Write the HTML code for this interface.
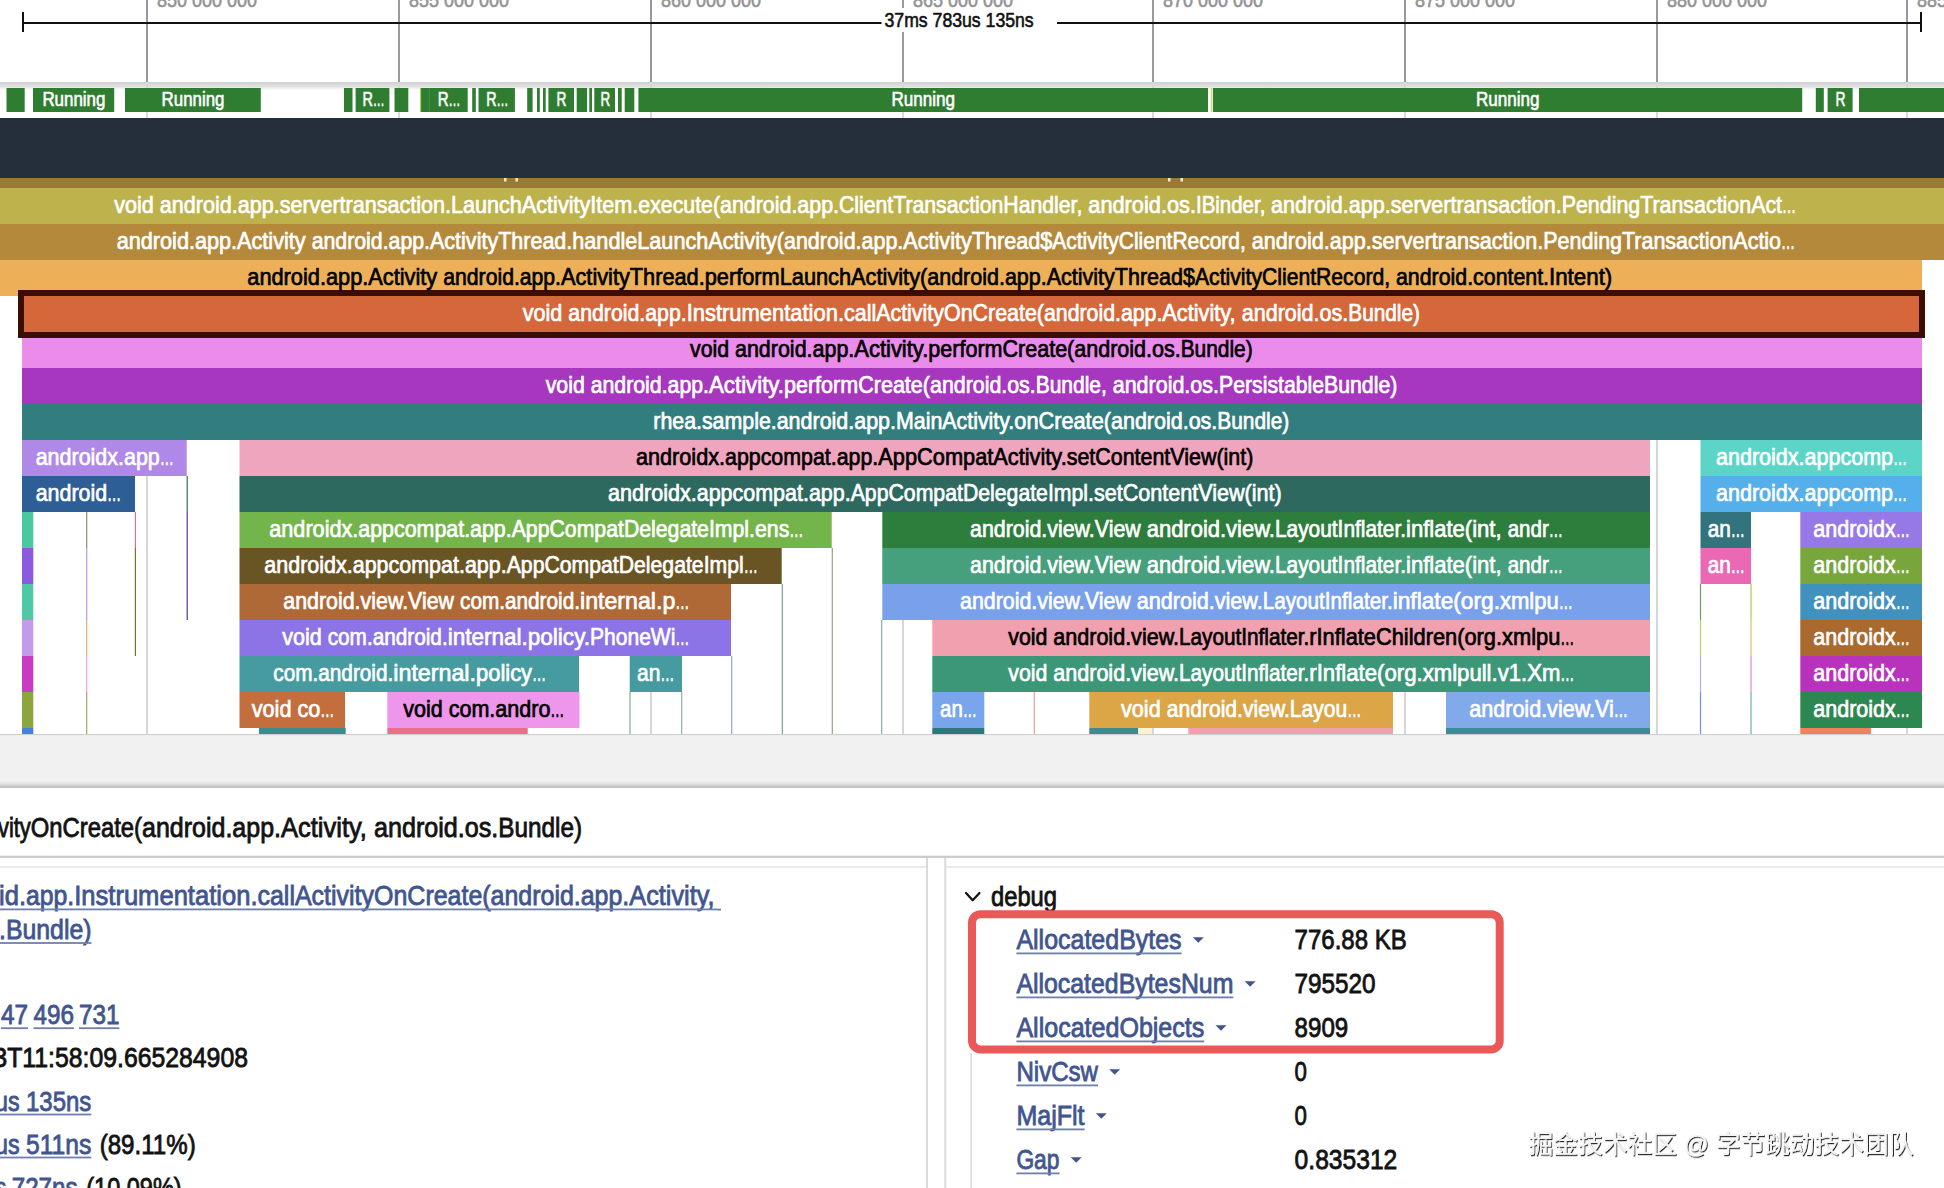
<!DOCTYPE html>
<html lang="en"><head><meta charset="utf-8"><title>Perfetto trace - slice details</title>
<style>
html,body{margin:0;padding:0;background:#fff;}
body{width:1944px;height:1188px;overflow:hidden;font-family:"Liberation Sans", "Noto Sans CJK SC", sans-serif;}
svg{display:block;font-family:"Liberation Sans", "Noto Sans CJK SC", sans-serif;}
text{white-space:pre;}
.wm{font-family:"Liberation Sans","Noto Sans CJK SC",sans-serif;}
</style></head><body>
<svg width="1944" height="1188" viewBox="0 0 1944 1188">
<defs>
<linearGradient id="trk" x1="0" y1="0" x2="0" y2="1"><stop offset="0" stop-color="#d0d0d0"/><stop offset="0.6" stop-color="#e2e2e2"/><stop offset="1" stop-color="#ffffff"/></linearGradient>
<linearGradient id="hdl" x1="0" y1="0" x2="0" y2="1"><stop offset="0" stop-color="#f1f1f1"/><stop offset="0.45" stop-color="#e6e6e6"/><stop offset="1" stop-color="#c4c4c4"/></linearGradient>
<filter id="wmf" x="-5%" y="-30%" width="110%" height="170%"><feDropShadow dx="1" dy="1.2" stdDeviation="0.7" flood-color="#000" flood-opacity="0.85"/></filter>
</defs>
<rect width="1944" height="1188" fill="#fff"/>

<g id="time-axis">
<rect x="146" y="0" width="2" height="82" fill="#999"/>
<text x="157" y="7" font-size="20" fill="#949494" stroke="#949494" stroke-width="0.60" textLength="100" lengthAdjust="spacingAndGlyphs">850 000 000</text>
<rect x="398" y="0" width="2" height="82" fill="#999"/>
<text x="409" y="7" font-size="20" fill="#949494" stroke="#949494" stroke-width="0.60" textLength="100" lengthAdjust="spacingAndGlyphs">855 000 000</text>
<rect x="650" y="0" width="2" height="82" fill="#999"/>
<text x="661" y="7" font-size="20" fill="#949494" stroke="#949494" stroke-width="0.60" textLength="100" lengthAdjust="spacingAndGlyphs">860 000 000</text>
<rect x="902" y="0" width="2" height="82" fill="#999"/>
<text x="913" y="7" font-size="20" fill="#949494" stroke="#949494" stroke-width="0.60" textLength="100" lengthAdjust="spacingAndGlyphs">865 000 000</text>
<rect x="1152" y="0" width="2" height="82" fill="#999"/>
<text x="1163" y="7" font-size="20" fill="#949494" stroke="#949494" stroke-width="0.60" textLength="100" lengthAdjust="spacingAndGlyphs">870 000 000</text>
<rect x="1404" y="0" width="2" height="82" fill="#999"/>
<text x="1415" y="7" font-size="20" fill="#949494" stroke="#949494" stroke-width="0.60" textLength="100" lengthAdjust="spacingAndGlyphs">875 000 000</text>
<rect x="1656" y="0" width="2" height="82" fill="#999"/>
<text x="1667" y="7" font-size="20" fill="#949494" stroke="#949494" stroke-width="0.60" textLength="100" lengthAdjust="spacingAndGlyphs">880 000 000</text>
<rect x="1906" y="0" width="2" height="82" fill="#999"/>
<text x="1917" y="7" font-size="20" fill="#949494" stroke="#949494" stroke-width="0.60" textLength="100" lengthAdjust="spacingAndGlyphs">885 000 000</text>
<rect x="23" y="22" width="1898" height="2" fill="#111"/>
<rect x="22" y="12" width="2" height="20" fill="#111"/>
<rect x="1920" y="12" width="2" height="20" fill="#111"/>
<rect x="881.5" y="8" width="175.5" height="24" fill="#fff"/>
<text x="884.5" y="27" font-size="20" fill="#111" stroke="#111" stroke-width="0.60" textLength="149.2" lengthAdjust="spacingAndGlyphs">37ms 783us 135ns</text>
</g>
<g id="thread-state">
<rect x="0" y="82" width="1944" height="36" fill="#fff"/>
<rect x="0" y="82" width="1944" height="8" fill="url(#trk)"/>
<rect x="146" y="82" width="2" height="36" fill="#d4dcd4"/>
<rect x="398" y="82" width="2" height="36" fill="#d4dcd4"/>
<rect x="650" y="82" width="2" height="36" fill="#d4dcd4"/>
<rect x="902" y="82" width="2" height="36" fill="#d4dcd4"/>
<rect x="1152" y="82" width="2" height="36" fill="#d4dcd4"/>
<rect x="1404" y="82" width="2" height="36" fill="#d4dcd4"/>
<rect x="1656" y="82" width="2" height="36" fill="#d4dcd4"/>
<rect x="1906" y="82" width="2" height="36" fill="#d4dcd4"/>
<rect x="6.5" y="88" width="18.2" height="24" fill="#2f7d31"/>
<rect x="33" y="88" width="81.2" height="24" fill="#2f7d31"/>
<rect x="125" y="88" width="135.8" height="24" fill="#2f7d31"/>
<rect x="344" y="88" width="8.5" height="24" fill="#2f7d31"/>
<rect x="355.6" y="88" width="33.8" height="24" fill="#2f7d31"/>
<rect x="394.5" y="88" width="13.8" height="24" fill="#2f7d31"/>
<rect x="420.9" y="88" width="46.8" height="24" fill="#2f7d31"/>
<rect x="472.2" y="88" width="3.6" height="24" fill="#2f7d31"/>
<rect x="478.5" y="88" width="36.4" height="24" fill="#2f7d31"/>
<rect x="527.2" y="88" width="5.4" height="24" fill="#2f7d31"/>
<rect x="537" y="88" width="2.8" height="24" fill="#2f7d31"/>
<rect x="543" y="88" width="2.7" height="24" fill="#2f7d31"/>
<rect x="548.4" y="88" width="25.6" height="24" fill="#2f7d31"/>
<rect x="576.7" y="88" width="10.4" height="24" fill="#2f7d31"/>
<rect x="589.3" y="88" width="2.7" height="24" fill="#2f7d31"/>
<rect x="594.3" y="88" width="20.7" height="24" fill="#2f7d31"/>
<rect x="618" y="88" width="3.7" height="24" fill="#2f7d31"/>
<rect x="624.7" y="88" width="9.6" height="24" fill="#2f7d31"/>
<rect x="638.4" y="88" width="569.6" height="24" fill="#2f7d31"/>
<rect x="1213" y="88" width="589.2" height="24" fill="#2f7d31"/>
<rect x="1815.8" y="88" width="8" height="24" fill="#2f7d31"/>
<rect x="1827.6" y="88" width="25" height="24" fill="#2f7d31"/>
<rect x="1859" y="88" width="85" height="24" fill="#2f7d31"/>
<rect x="428.9" y="88" width="0.7" height="24" fill="#4f9452"/>
<rect x="420.2" y="88" width="1" height="24" fill="#9bbf2e"/>
<rect x="1210.8" y="88" width="1.6" height="24" fill="#c6d878"/>
<text x="42.4" y="105.8" font-size="20" fill="#fff" stroke="#fff" stroke-width="0.60" textLength="63" lengthAdjust="spacingAndGlyphs">Running</text>
<text x="161.6" y="105.8" font-size="20" fill="#fff" stroke="#fff" stroke-width="0.60" textLength="62.9" lengthAdjust="spacingAndGlyphs">Running</text>
<text y="105.8" font-size="20" fill="#fff" stroke="#fff" stroke-width="0.60"><tspan x="362.4" textLength="10.4" lengthAdjust="spacingAndGlyphs">R</tspan><tspan x="372.8" textLength="11.9" lengthAdjust="spacingAndGlyphs">…</tspan></text>
<text y="105.8" font-size="20" fill="#fff" stroke="#fff" stroke-width="0.60"><tspan x="437.7" textLength="10.9" lengthAdjust="spacingAndGlyphs">R</tspan><tspan x="448.6" textLength="11.9" lengthAdjust="spacingAndGlyphs">…</tspan></text>
<text y="105.8" font-size="20" fill="#fff" stroke="#fff" stroke-width="0.60"><tspan x="486.3" textLength="10.3" lengthAdjust="spacingAndGlyphs">R</tspan><tspan x="496.6" textLength="11.9" lengthAdjust="spacingAndGlyphs">…</tspan></text>
<text x="556.5" y="105.8" font-size="20" fill="#fff" stroke="#fff" stroke-width="0.60" textLength="9.9" lengthAdjust="spacingAndGlyphs">R</text>
<text x="600.6" y="105.8" font-size="20" fill="#fff" stroke="#fff" stroke-width="0.60" textLength="9.7" lengthAdjust="spacingAndGlyphs">R</text>
<text x="891.5" y="105.8" font-size="20" fill="#fff" stroke="#fff" stroke-width="0.60" textLength="63.5" lengthAdjust="spacingAndGlyphs">Running</text>
<text x="1476" y="105.8" font-size="20" fill="#fff" stroke="#fff" stroke-width="0.60" textLength="63.5" lengthAdjust="spacingAndGlyphs">Running</text>
<text x="1835.4" y="105.8" font-size="20" fill="#fff" stroke="#fff" stroke-width="0.60" textLength="10" lengthAdjust="spacingAndGlyphs">R</text>
</g>
<rect x="0" y="118" width="1944" height="60" fill="#252e3b"/>
<g id="slices">
<rect x="146" y="178" width="2" height="556" fill="#d6d6d6"/>
<rect x="398" y="178" width="2" height="556" fill="#d6d6d6"/>
<rect x="650" y="178" width="2" height="556" fill="#d6d6d6"/>
<rect x="902" y="178" width="2" height="556" fill="#d6d6d6"/>
<rect x="1152" y="178" width="2" height="556" fill="#d6d6d6"/>
<rect x="1404" y="178" width="2" height="556" fill="#d6d6d6"/>
<rect x="1656" y="178" width="2" height="556" fill="#d6d6d6"/>
<rect x="1906" y="178" width="2" height="556" fill="#d6d6d6"/>
<rect x="0" y="178" width="1944" height="10" fill="#9b7a37"/>
<rect x="504" y="178" width="2.5" height="3.5" fill="#f3ead6"/>
<rect x="515.5" y="178" width="2.5" height="3.5" fill="#f3ead6"/>
<rect x="1168" y="178" width="2.5" height="3.5" fill="#f3ead6"/>
<rect x="1180.5" y="178" width="2.5" height="3.5" fill="#f3ead6"/>
<rect x="0" y="188" width="1944" height="36" fill="#bdb24c"/>
<rect x="0" y="224" width="1944" height="36" fill="#b4893c"/>
<rect x="0" y="260" width="1922" height="36" fill="#edb058"/>
<rect x="22" y="332" width="1900" height="36" fill="#eb8ceb"/>
<rect x="22" y="368" width="1900" height="36" fill="#a637be"/>
<rect x="22" y="404" width="1900" height="36" fill="#327d7d"/>
<rect x="21" y="293" width="1901" height="42" fill="#d5683a" stroke="#3d0c02" stroke-width="6"/>
<rect x="22" y="440" width="164.7" height="36" fill="#b088e8"/>
<rect x="239.5" y="440" width="1410.5" height="36" fill="#f0a5be"/>
<rect x="1700.5" y="440" width="221.5" height="36" fill="#5cd4c8"/>
<rect x="22" y="476" width="113" height="36" fill="#2d5f96"/>
<rect x="239.5" y="476" width="1410.5" height="36" fill="#2d695f"/>
<rect x="1700.5" y="476" width="221.5" height="36" fill="#55afeb"/>
<rect x="22" y="512" width="11.3" height="36" fill="#4bc8a0"/>
<rect x="239.5" y="512" width="592.2" height="36" fill="#73b44b"/>
<rect x="882.3" y="512" width="767.7" height="36" fill="#2d7d3c"/>
<rect x="1700.5" y="512" width="50.5" height="36" fill="#32737d"/>
<rect x="1800.3" y="512" width="121.7" height="36" fill="#9678e6"/>
<rect x="22" y="548" width="11.3" height="36" fill="#8c5adc"/>
<rect x="239.5" y="548" width="542.2" height="36" fill="#695523"/>
<rect x="882.3" y="548" width="767.7" height="36" fill="#46a07d"/>
<rect x="1700.5" y="548" width="50.5" height="36" fill="#eb69b4"/>
<rect x="1800.3" y="548" width="121.7" height="36" fill="#78a53c"/>
<rect x="22" y="584" width="11.3" height="36" fill="#50c8a5"/>
<rect x="239.5" y="584" width="491.5" height="36" fill="#af6937"/>
<rect x="882.3" y="584" width="767.7" height="36" fill="#78a0eb"/>
<rect x="1800.3" y="584" width="121.7" height="36" fill="#4191be"/>
<rect x="22" y="620" width="11.3" height="36" fill="#c39beb"/>
<rect x="239.5" y="620" width="491.5" height="36" fill="#8c73e6"/>
<rect x="932.3" y="620" width="717.7" height="36" fill="#f0a0af"/>
<rect x="1800.3" y="620" width="121.7" height="36" fill="#aa692d"/>
<rect x="22" y="656" width="11.3" height="36" fill="#c83cc3"/>
<rect x="239.5" y="656" width="339.5" height="36" fill="#469ba0"/>
<rect x="629.7" y="656" width="52.3" height="36" fill="#469ba0"/>
<rect x="932.3" y="656" width="717.7" height="36" fill="#3c9678"/>
<rect x="1800.3" y="656" width="121.7" height="36" fill="#b932be"/>
<rect x="22" y="692" width="11.3" height="36" fill="#8ca53c"/>
<rect x="239.5" y="692" width="105.5" height="36" fill="#c36e3c"/>
<rect x="387.3" y="692" width="192.2" height="36" fill="#ee96eb"/>
<rect x="932.3" y="692" width="52" height="36" fill="#78a5eb"/>
<rect x="1089.3" y="692" width="303.7" height="36" fill="#dca546"/>
<rect x="1446" y="692" width="204" height="36" fill="#82aaeb"/>
<rect x="1800.3" y="692" width="121.7" height="36" fill="#2d8750"/>
<rect x="22" y="728" width="11.3" height="6" fill="#4682d7"/>
<rect x="259" y="728" width="86.7" height="6" fill="#3c8c8c"/>
<rect x="387.3" y="728" width="140.4" height="6" fill="#eb6e8c"/>
<rect x="932.3" y="728" width="52" height="6" fill="#2d7878"/>
<rect x="1089.3" y="728" width="49" height="6" fill="#3c8c8c"/>
<rect x="1138.3" y="728" width="13.7" height="6" fill="#fbf3d0"/>
<rect x="1188.3" y="728" width="204.7" height="6" fill="#f0a0af"/>
<rect x="1446" y="728" width="204" height="6" fill="#3c8c96"/>
<rect x="1800.3" y="728" width="70.7" height="6" fill="#f0825a"/>
<rect x="86.1" y="512" width="1.2" height="36" fill="#8a9070"/>
<rect x="86.1" y="548" width="1.2" height="72" fill="#b39ae0"/>
<rect x="86.1" y="620" width="1.2" height="36" fill="#e8b060"/>
<rect x="86.1" y="656" width="1.2" height="36" fill="#f0a0e0"/>
<rect x="86.1" y="692" width="1.2" height="42" fill="#a0a870"/>
<rect x="134.8" y="512" width="1.2" height="36" fill="#e07090"/>
<rect x="134.8" y="548" width="1.2" height="108" fill="#77752a"/>
<rect x="186.6" y="476" width="1.2" height="36" fill="#2f6f60"/>
<rect x="186.6" y="512" width="1.2" height="108" fill="#5038a0"/>
<rect x="629.4" y="692" width="1.2" height="42" fill="#7ab0a0"/>
<rect x="681.1" y="692" width="1.2" height="42" fill="#8fb0a8"/>
<rect x="731.1" y="656" width="1.2" height="78" fill="#9aa0d8"/>
<rect x="781.7" y="584" width="1.2" height="150" fill="#7fa090"/>
<rect x="831.7" y="548" width="1.2" height="186" fill="#90a880"/>
<rect x="881.1" y="620" width="1.2" height="114" fill="#80a8c0"/>
<rect x="1033.7" y="692" width="1.2" height="42" fill="#e0a0a0"/>
<rect x="1699.9" y="584" width="1.2" height="36" fill="#6f9a60"/>
<rect x="1699.9" y="620" width="1.2" height="36" fill="#b8d060"/>
<rect x="1699.9" y="656" width="1.2" height="36" fill="#c0a8e8"/>
<rect x="1699.9" y="692" width="1.2" height="42" fill="#7090e0"/>
<rect x="1750.4" y="584" width="1.2" height="36" fill="#b0c860"/>
<rect x="1750.4" y="620" width="1.2" height="36" fill="#d8c070"/>
<rect x="1750.4" y="656" width="1.2" height="36" fill="#d090d8"/>
<rect x="1750.4" y="692" width="1.2" height="42" fill="#70b0a8"/>
<text y="212.8" font-size="24" fill="#fff" stroke="#fff" stroke-width="0.72"><tspan x="114.3" textLength="336.7" lengthAdjust="spacingAndGlyphs">void android.app.servertransaction.</tspan><tspan x="451" textLength="187.3" lengthAdjust="spacingAndGlyphs">LaunchActivityItem.</tspan><tspan x="638.3" textLength="81.7" lengthAdjust="spacingAndGlyphs">execute(</tspan><tspan x="720" textLength="119" lengthAdjust="spacingAndGlyphs">android.app.</tspan><tspan x="839" textLength="249.3" lengthAdjust="spacingAndGlyphs">ClientTransactionHandler, </tspan><tspan x="1088.3" textLength="107.7" lengthAdjust="spacingAndGlyphs">android.os.</tspan><tspan x="1196" textLength="75" lengthAdjust="spacingAndGlyphs">IBinder, </tspan><tspan x="1271" textLength="290.7" lengthAdjust="spacingAndGlyphs">android.app.servertransaction.</tspan><tspan x="1561.7" textLength="220.36" lengthAdjust="spacingAndGlyphs">PendingTransactionAct</tspan><tspan x="1782.06" textLength="14.14" lengthAdjust="spacingAndGlyphs">…</tspan></text>
<text y="248.8" font-size="24" fill="#fff" stroke="#fff" stroke-width="0.72"><tspan x="116.7" textLength="195" lengthAdjust="spacingAndGlyphs">android.app.Activity </tspan><tspan x="311.7" textLength="118.3" lengthAdjust="spacingAndGlyphs">android.app.</tspan><tspan x="430" textLength="142.3" lengthAdjust="spacingAndGlyphs">ActivityThread.</tspan><tspan x="572.3" textLength="211.7" lengthAdjust="spacingAndGlyphs">handleLaunchActivity(</tspan><tspan x="784" textLength="119.3" lengthAdjust="spacingAndGlyphs">android.app.</tspan><tspan x="903.3" textLength="149" lengthAdjust="spacingAndGlyphs">ActivityThread$</tspan><tspan x="1052.3" textLength="199.4" lengthAdjust="spacingAndGlyphs">ActivityClientRecord, </tspan><tspan x="1251.7" textLength="291.6" lengthAdjust="spacingAndGlyphs">android.app.servertransaction.</tspan><tspan x="1543.3" textLength="237.76" lengthAdjust="spacingAndGlyphs">PendingTransactionActio</tspan><tspan x="1781.06" textLength="14.14" lengthAdjust="spacingAndGlyphs">…</tspan></text>
<text y="284.8" font-size="24" fill="#000" stroke="#000" stroke-width="0.72"><tspan x="247.3" textLength="196" lengthAdjust="spacingAndGlyphs">android.app.Activity </tspan><tspan x="443.3" textLength="117.7" lengthAdjust="spacingAndGlyphs">android.app.</tspan><tspan x="561" textLength="143.7" lengthAdjust="spacingAndGlyphs">ActivityThread.</tspan><tspan x="704.7" textLength="222.6" lengthAdjust="spacingAndGlyphs">performLaunchActivity(</tspan><tspan x="927.3" textLength="119.4" lengthAdjust="spacingAndGlyphs">android.app.</tspan><tspan x="1046.7" textLength="148.3" lengthAdjust="spacingAndGlyphs">ActivityThread$</tspan><tspan x="1195" textLength="201" lengthAdjust="spacingAndGlyphs">ActivityClientRecord, </tspan><tspan x="1396" textLength="153" lengthAdjust="spacingAndGlyphs">android.content.</tspan><tspan x="1549" textLength="63.3" lengthAdjust="spacingAndGlyphs">Intent)</tspan></text>
<text y="320.8" font-size="24" fill="#fff" stroke="#fff" stroke-width="0.72"><tspan x="522.7" textLength="45.6" lengthAdjust="spacingAndGlyphs">void </tspan><tspan x="568.3" textLength="118.4" lengthAdjust="spacingAndGlyphs">android.app.</tspan><tspan x="686.7" textLength="157.3" lengthAdjust="spacingAndGlyphs">Instrumentation.</tspan><tspan x="844" textLength="200" lengthAdjust="spacingAndGlyphs">callActivityOnCreate(</tspan><tspan x="1044" textLength="118.3" lengthAdjust="spacingAndGlyphs">android.app.</tspan><tspan x="1162.3" textLength="79.4" lengthAdjust="spacingAndGlyphs">Activity, </tspan><tspan x="1241.7" textLength="106.6" lengthAdjust="spacingAndGlyphs">android.os.</tspan><tspan x="1348.3" textLength="71.7" lengthAdjust="spacingAndGlyphs">Bundle)</tspan></text>
<text y="356.8" font-size="24" fill="#000" stroke="#000" stroke-width="0.72"><tspan x="690" textLength="45" lengthAdjust="spacingAndGlyphs">void </tspan><tspan x="735" textLength="119.3" lengthAdjust="spacingAndGlyphs">android.app.</tspan><tspan x="854.3" textLength="74" lengthAdjust="spacingAndGlyphs">Activity.</tspan><tspan x="928.3" textLength="146" lengthAdjust="spacingAndGlyphs">performCreate(</tspan><tspan x="1074.3" textLength="106.4" lengthAdjust="spacingAndGlyphs">android.os.</tspan><tspan x="1180.7" textLength="72" lengthAdjust="spacingAndGlyphs">Bundle)</tspan></text>
<text y="392.8" font-size="24" fill="#fff" stroke="#fff" stroke-width="0.72"><tspan x="545.7" textLength="45" lengthAdjust="spacingAndGlyphs">void </tspan><tspan x="590.7" textLength="118.3" lengthAdjust="spacingAndGlyphs">android.app.</tspan><tspan x="709" textLength="75" lengthAdjust="spacingAndGlyphs">Activity.</tspan><tspan x="784" textLength="146" lengthAdjust="spacingAndGlyphs">performCreate(</tspan><tspan x="930" textLength="105.7" lengthAdjust="spacingAndGlyphs">android.os.</tspan><tspan x="1035.7" textLength="77" lengthAdjust="spacingAndGlyphs">Bundle, </tspan><tspan x="1112.7" textLength="106.3" lengthAdjust="spacingAndGlyphs">android.os.</tspan><tspan x="1219" textLength="178.3" lengthAdjust="spacingAndGlyphs">PersistableBundle)</tspan></text>
<text y="428.8" font-size="24" fill="#fff" stroke="#fff" stroke-width="0.72"><tspan x="653.3" textLength="123.4" lengthAdjust="spacingAndGlyphs">rhea.sample.</tspan><tspan x="776.7" textLength="119.3" lengthAdjust="spacingAndGlyphs">android.app.</tspan><tspan x="896" textLength="118.3" lengthAdjust="spacingAndGlyphs">MainActivity.</tspan><tspan x="1014.3" textLength="96.7" lengthAdjust="spacingAndGlyphs">onCreate(</tspan><tspan x="1111" textLength="106.3" lengthAdjust="spacingAndGlyphs">android.os.</tspan><tspan x="1217.3" textLength="72" lengthAdjust="spacingAndGlyphs">Bundle)</tspan></text>
<text y="464.8" font-size="24" fill="#fff" stroke="#fff" stroke-width="0.72"><tspan x="35.7" textLength="124.06" lengthAdjust="spacingAndGlyphs">androidx.app</tspan><tspan x="159.76" textLength="14.14" lengthAdjust="spacingAndGlyphs">…</tspan></text>
<text y="464.8" font-size="24" fill="#fff" stroke="#fff" stroke-width="0.72"><tspan x="1716" textLength="177.06" lengthAdjust="spacingAndGlyphs">androidx.appcomp</tspan><tspan x="1893.06" textLength="14.14" lengthAdjust="spacingAndGlyphs">…</tspan></text>
<text y="464.8" font-size="24" fill="#000" stroke="#000" stroke-width="0.72"><tspan x="636" textLength="89" lengthAdjust="spacingAndGlyphs">androidx.</tspan><tspan x="725" textLength="153.3" lengthAdjust="spacingAndGlyphs">appcompat.app.</tspan><tspan x="878.3" textLength="188.4" lengthAdjust="spacingAndGlyphs">AppCompatActivity.</tspan><tspan x="1066.7" textLength="186.6" lengthAdjust="spacingAndGlyphs">setContentView(int)</tspan></text>
<text y="500.8" font-size="24" fill="#fff" stroke="#fff" stroke-width="0.72"><tspan x="35.7" textLength="71.36" lengthAdjust="spacingAndGlyphs">android</tspan><tspan x="107.06" textLength="14.14" lengthAdjust="spacingAndGlyphs">…</tspan></text>
<text y="500.8" font-size="24" fill="#fff" stroke="#fff" stroke-width="0.72"><tspan x="1716" textLength="177.06" lengthAdjust="spacingAndGlyphs">androidx.appcomp</tspan><tspan x="1893.06" textLength="14.14" lengthAdjust="spacingAndGlyphs">…</tspan></text>
<text y="500.8" font-size="24" fill="#fff" stroke="#fff" stroke-width="0.72"><tspan x="608" textLength="88.7" lengthAdjust="spacingAndGlyphs">androidx.</tspan><tspan x="696.7" textLength="154" lengthAdjust="spacingAndGlyphs">appcompat.app.</tspan><tspan x="850.7" textLength="243.3" lengthAdjust="spacingAndGlyphs">AppCompatDelegateImpl.</tspan><tspan x="1094" textLength="187.7" lengthAdjust="spacingAndGlyphs">setContentView(int)</tspan></text>
<text y="536.8" font-size="24" fill="#fff" stroke="#fff" stroke-width="0.72"><tspan x="269.3" textLength="89" lengthAdjust="spacingAndGlyphs">androidx.</tspan><tspan x="358.3" textLength="153.4" lengthAdjust="spacingAndGlyphs">appcompat.app.</tspan><tspan x="511.7" textLength="243.3" lengthAdjust="spacingAndGlyphs">AppCompatDelegateImpl.</tspan><tspan x="755" textLength="34.36" lengthAdjust="spacingAndGlyphs">ens</tspan><tspan x="789.36" textLength="14.14" lengthAdjust="spacingAndGlyphs">…</tspan></text>
<text y="536.8" font-size="24" fill="#fff" stroke="#fff" stroke-width="0.72"><tspan x="970" textLength="176.7" lengthAdjust="spacingAndGlyphs">android.view.View </tspan><tspan x="1146.7" textLength="128.3" lengthAdjust="spacingAndGlyphs">android.view.</tspan><tspan x="1275" textLength="131" lengthAdjust="spacingAndGlyphs">LayoutInflater.</tspan><tspan x="1406" textLength="101.7" lengthAdjust="spacingAndGlyphs">inflate(int, </tspan><tspan x="1507.7" textLength="41.06" lengthAdjust="spacingAndGlyphs">andr</tspan><tspan x="1548.76" textLength="14.14" lengthAdjust="spacingAndGlyphs">…</tspan></text>
<text y="536.8" font-size="24" fill="#fff" stroke="#fff" stroke-width="0.72"><tspan x="1707.7" textLength="23.06" lengthAdjust="spacingAndGlyphs">an</tspan><tspan x="1730.76" textLength="14.14" lengthAdjust="spacingAndGlyphs">…</tspan></text>
<text y="572.8" font-size="24" fill="#fff" stroke="#fff" stroke-width="0.72"><tspan x="264.3" textLength="88.4" lengthAdjust="spacingAndGlyphs">androidx.</tspan><tspan x="352.7" textLength="154" lengthAdjust="spacingAndGlyphs">appcompat.app.</tspan><tspan x="506.7" textLength="237.06" lengthAdjust="spacingAndGlyphs">AppCompatDelegateImpl</tspan><tspan x="743.76" textLength="14.14" lengthAdjust="spacingAndGlyphs">…</tspan></text>
<text y="572.8" font-size="24" fill="#fff" stroke="#fff" stroke-width="0.72"><tspan x="970" textLength="176.7" lengthAdjust="spacingAndGlyphs">android.view.View </tspan><tspan x="1146.7" textLength="128.3" lengthAdjust="spacingAndGlyphs">android.view.</tspan><tspan x="1275" textLength="131" lengthAdjust="spacingAndGlyphs">LayoutInflater.</tspan><tspan x="1406" textLength="101.7" lengthAdjust="spacingAndGlyphs">inflate(int, </tspan><tspan x="1507.7" textLength="41.06" lengthAdjust="spacingAndGlyphs">andr</tspan><tspan x="1548.76" textLength="14.14" lengthAdjust="spacingAndGlyphs">…</tspan></text>
<text y="572.8" font-size="24" fill="#fff" stroke="#fff" stroke-width="0.72"><tspan x="1707.7" textLength="23.06" lengthAdjust="spacingAndGlyphs">an</tspan><tspan x="1730.76" textLength="14.14" lengthAdjust="spacingAndGlyphs">…</tspan></text>
<text y="608.8" font-size="24" fill="#fff" stroke="#fff" stroke-width="0.72"><tspan x="283.3" textLength="176.7" lengthAdjust="spacingAndGlyphs">android.view.View </tspan><tspan x="460" textLength="120" lengthAdjust="spacingAndGlyphs">com.android.</tspan><tspan x="580" textLength="95.36" lengthAdjust="spacingAndGlyphs">internal.p</tspan><tspan x="675.36" textLength="14.14" lengthAdjust="spacingAndGlyphs">…</tspan></text>
<text y="608.8" font-size="24" fill="#fff" stroke="#fff" stroke-width="0.72"><tspan x="960" textLength="176.7" lengthAdjust="spacingAndGlyphs">android.view.View </tspan><tspan x="1136.7" textLength="126" lengthAdjust="spacingAndGlyphs">android.view.</tspan><tspan x="1262.7" textLength="130" lengthAdjust="spacingAndGlyphs">LayoutInflater.</tspan><tspan x="1392.7" textLength="107.3" lengthAdjust="spacingAndGlyphs">inflate(org.</tspan><tspan x="1500" textLength="58.76" lengthAdjust="spacingAndGlyphs">xmlpu</tspan><tspan x="1558.76" textLength="14.14" lengthAdjust="spacingAndGlyphs">…</tspan></text>
<text y="644.8" font-size="24" fill="#fff" stroke="#fff" stroke-width="0.72"><tspan x="282.3" textLength="45.4" lengthAdjust="spacingAndGlyphs">void </tspan><tspan x="327.7" textLength="120" lengthAdjust="spacingAndGlyphs">com.android.</tspan><tspan x="447.7" textLength="142.3" lengthAdjust="spacingAndGlyphs">internal.policy.</tspan><tspan x="590" textLength="85.36" lengthAdjust="spacingAndGlyphs">PhoneWi</tspan><tspan x="675.36" textLength="14.14" lengthAdjust="spacingAndGlyphs">…</tspan></text>
<text y="644.8" font-size="24" fill="#000" stroke="#000" stroke-width="0.72"><tspan x="1008.3" textLength="45" lengthAdjust="spacingAndGlyphs">void </tspan><tspan x="1053.3" textLength="125.7" lengthAdjust="spacingAndGlyphs">android.view.</tspan><tspan x="1179" textLength="130.3" lengthAdjust="spacingAndGlyphs">LayoutInflater.</tspan><tspan x="1309.3" textLength="192.7" lengthAdjust="spacingAndGlyphs">rInflateChildren(org.</tspan><tspan x="1502" textLength="58.36" lengthAdjust="spacingAndGlyphs">xmlpu</tspan><tspan x="1560.36" textLength="14.14" lengthAdjust="spacingAndGlyphs">…</tspan></text>
<text y="680.8" font-size="24" fill="#fff" stroke="#fff" stroke-width="0.72"><tspan x="273.3" textLength="120" lengthAdjust="spacingAndGlyphs">com.android.</tspan><tspan x="393.3" textLength="82.7" lengthAdjust="spacingAndGlyphs">internal.</tspan><tspan x="476" textLength="56.06" lengthAdjust="spacingAndGlyphs">policy</tspan><tspan x="532.06" textLength="14.14" lengthAdjust="spacingAndGlyphs">…</tspan></text>
<text y="680.8" font-size="24" fill="#fff" stroke="#fff" stroke-width="0.72"><tspan x="637" textLength="23.36" lengthAdjust="spacingAndGlyphs">an</tspan><tspan x="660.36" textLength="14.14" lengthAdjust="spacingAndGlyphs">…</tspan></text>
<text y="680.8" font-size="24" fill="#fff" stroke="#fff" stroke-width="0.72"><tspan x="1008.3" textLength="45" lengthAdjust="spacingAndGlyphs">void </tspan><tspan x="1053.3" textLength="125.7" lengthAdjust="spacingAndGlyphs">android.view.</tspan><tspan x="1179" textLength="130.3" lengthAdjust="spacingAndGlyphs">LayoutInflater.</tspan><tspan x="1309.3" textLength="113.4" lengthAdjust="spacingAndGlyphs">rInflate(org.</tspan><tspan x="1422.7" textLength="137.66" lengthAdjust="spacingAndGlyphs">xmlpull.v1.Xm</tspan><tspan x="1560.36" textLength="14.14" lengthAdjust="spacingAndGlyphs">…</tspan></text>
<text y="716.8" font-size="24" fill="#fff" stroke="#fff" stroke-width="0.72"><tspan x="251.7" textLength="68.66" lengthAdjust="spacingAndGlyphs">void co</tspan><tspan x="320.36" textLength="14.14" lengthAdjust="spacingAndGlyphs">…</tspan></text>
<text y="716.8" font-size="24" fill="#000" stroke="#000" stroke-width="0.72"><tspan x="403.3" textLength="147.06" lengthAdjust="spacingAndGlyphs">void com.andro</tspan><tspan x="550.36" textLength="14.14" lengthAdjust="spacingAndGlyphs">…</tspan></text>
<text y="716.8" font-size="24" fill="#fff" stroke="#fff" stroke-width="0.72"><tspan x="940" textLength="22.76" lengthAdjust="spacingAndGlyphs">an</tspan><tspan x="962.76" textLength="14.14" lengthAdjust="spacingAndGlyphs">…</tspan></text>
<text y="716.8" font-size="24" fill="#fff" stroke="#fff" stroke-width="0.72"><tspan x="1121" textLength="45.7" lengthAdjust="spacingAndGlyphs">void </tspan><tspan x="1166.7" textLength="180.66" lengthAdjust="spacingAndGlyphs">android.view.Layou</tspan><tspan x="1347.36" textLength="14.14" lengthAdjust="spacingAndGlyphs">…</tspan></text>
<text y="716.8" font-size="24" fill="#fff" stroke="#fff" stroke-width="0.72"><tspan x="1469.3" textLength="144.46" lengthAdjust="spacingAndGlyphs">android.view.Vi</tspan><tspan x="1613.76" textLength="14.14" lengthAdjust="spacingAndGlyphs">…</tspan></text>
<text y="536.8" font-size="24" fill="#fff" stroke="#fff" stroke-width="0.72"><tspan x="1813.3" textLength="82.46" lengthAdjust="spacingAndGlyphs">androidx</tspan><tspan x="1895.76" textLength="14.14" lengthAdjust="spacingAndGlyphs">…</tspan></text>
<text y="572.8" font-size="24" fill="#fff" stroke="#fff" stroke-width="0.72"><tspan x="1813.3" textLength="82.46" lengthAdjust="spacingAndGlyphs">androidx</tspan><tspan x="1895.76" textLength="14.14" lengthAdjust="spacingAndGlyphs">…</tspan></text>
<text y="608.8" font-size="24" fill="#fff" stroke="#fff" stroke-width="0.72"><tspan x="1813.3" textLength="82.46" lengthAdjust="spacingAndGlyphs">androidx</tspan><tspan x="1895.76" textLength="14.14" lengthAdjust="spacingAndGlyphs">…</tspan></text>
<text y="644.8" font-size="24" fill="#fff" stroke="#fff" stroke-width="0.72"><tspan x="1813.3" textLength="82.46" lengthAdjust="spacingAndGlyphs">androidx</tspan><tspan x="1895.76" textLength="14.14" lengthAdjust="spacingAndGlyphs">…</tspan></text>
<text y="680.8" font-size="24" fill="#fff" stroke="#fff" stroke-width="0.72"><tspan x="1813.3" textLength="82.46" lengthAdjust="spacingAndGlyphs">androidx</tspan><tspan x="1895.76" textLength="14.14" lengthAdjust="spacingAndGlyphs">…</tspan></text>
<text y="716.8" font-size="24" fill="#fff" stroke="#fff" stroke-width="0.72"><tspan x="1813.3" textLength="82.46" lengthAdjust="spacingAndGlyphs">androidx</tspan><tspan x="1895.76" textLength="14.14" lengthAdjust="spacingAndGlyphs">…</tspan></text>
</g>
<g id="details">
<rect x="0" y="734" width="1944" height="1.5" fill="#cfcfcf"/>
<rect x="0" y="735.5" width="1944" height="44.5" fill="#f1f1f1"/>
<rect x="0" y="780" width="1944" height="7" fill="url(#hdl)"/>
<rect x="0" y="786.5" width="1944" height="1.5" fill="#c2c2c2"/>
<rect x="0" y="788" width="1944" height="400" fill="#fff"/>
<text y="837" font-size="28" fill="#121212" stroke="#121212" stroke-width="0.84"><tspan x="-2" textLength="32.8" lengthAdjust="spacingAndGlyphs">vity</tspan><tspan x="30.8" textLength="111.2" lengthAdjust="spacingAndGlyphs">OnCreate(</tspan><tspan x="142" textLength="139" lengthAdjust="spacingAndGlyphs">android.app.</tspan><tspan x="281" textLength="93" lengthAdjust="spacingAndGlyphs">Activity, </tspan><tspan x="374" textLength="124.3" lengthAdjust="spacingAndGlyphs">android.os.</tspan><tspan x="498.3" textLength="83.7" lengthAdjust="spacingAndGlyphs">Bundle)</tspan></text>
<rect x="0" y="855.7" width="1944" height="2.3" fill="#cccccc"/>
<rect x="0" y="866.3" width="927" height="1.5" fill="#e4e4e4"/>
<rect x="926" y="858" width="2" height="330" fill="#dadada"/>
<rect x="944.3" y="858" width="2" height="330" fill="#dadada"/>
<rect x="946" y="866.3" width="998" height="1.5" fill="#e4e4e4"/>
<text y="905.4" font-size="28" fill="#41558f" stroke="#41558f" stroke-width="0.84"><tspan x="-1" textLength="27" lengthAdjust="spacingAndGlyphs">id.</tspan><tspan x="26" textLength="48.2" lengthAdjust="spacingAndGlyphs">app.</tspan><tspan x="74.2" textLength="183.3" lengthAdjust="spacingAndGlyphs">Instrumentation.</tspan><tspan x="257.5" textLength="233.1" lengthAdjust="spacingAndGlyphs">callActivityOnCreate(</tspan><tspan x="490.6" textLength="138.7" lengthAdjust="spacingAndGlyphs">android.app.</tspan><tspan x="629.3" textLength="85.2" lengthAdjust="spacingAndGlyphs">Activity,</tspan></text>
<rect x="-1" y="908.5" width="718" height="1.8" fill="#6f7fae"/>
<rect x="717" y="908.7" width="4" height="1.8" fill="#6f7fae"/>
<text x="-1" y="939" font-size="28" fill="#41558f" stroke="#41558f" stroke-width="0.84" textLength="92.5" lengthAdjust="spacingAndGlyphs">.Bundle)</text>
<rect x="-1" y="942.1" width="92.5" height="1.8" fill="#6f7fae"/>
<text x="1" y="1024.2" font-size="28" fill="#41558f" stroke="#41558f" stroke-width="0.84" textLength="27" lengthAdjust="spacingAndGlyphs">47</text>
<rect x="1" y="1027.3" width="27" height="1.8" fill="#6f7fae"/>
<text x="33.5" y="1024.2" font-size="28" fill="#41558f" stroke="#41558f" stroke-width="0.84" textLength="40.5" lengthAdjust="spacingAndGlyphs">496</text>
<rect x="33.5" y="1027.3" width="40.5" height="1.8" fill="#6f7fae"/>
<text x="79" y="1024.2" font-size="28" fill="#41558f" stroke="#41558f" stroke-width="0.84" textLength="40.4" lengthAdjust="spacingAndGlyphs">731</text>
<rect x="79" y="1027.3" width="40.4" height="1.8" fill="#6f7fae"/>
<text y="1067" font-size="28" fill="#121212" stroke="#121212" stroke-width="0.84"><tspan x="-7" textLength="14.2" lengthAdjust="spacingAndGlyphs">3</tspan><tspan x="7.2" textLength="240.8" lengthAdjust="spacingAndGlyphs">T11:58:09.665284908</tspan></text>
<text y="1110.5" font-size="28" fill="#41558f" stroke="#41558f" stroke-width="0.84"><tspan x="-5" textLength="31" lengthAdjust="spacingAndGlyphs">us </tspan><tspan x="26" textLength="65.3" lengthAdjust="spacingAndGlyphs">135ns</tspan></text>
<rect x="-5" y="1113.6" width="96.3" height="1.8" fill="#6f7fae"/>
<text y="1153.5" font-size="28" fill="#41558f" stroke="#41558f" stroke-width="0.84"><tspan x="-5" textLength="31" lengthAdjust="spacingAndGlyphs">us </tspan><tspan x="26" textLength="65.3" lengthAdjust="spacingAndGlyphs">511ns</tspan></text>
<rect x="-5" y="1156.6" width="96.3" height="1.8" fill="#6f7fae"/>
<text x="99.7" y="1153.5" font-size="28" fill="#121212" stroke="#121212" stroke-width="0.84" textLength="96" lengthAdjust="spacingAndGlyphs">(89.11%)</text>
<text y="1196.5" font-size="28" fill="#41558f" stroke="#41558f" stroke-width="0.84"><tspan x="-4" textLength="15.7" lengthAdjust="spacingAndGlyphs">s </tspan><tspan x="11.7" textLength="65.9" lengthAdjust="spacingAndGlyphs">727ns</tspan></text>
<text x="86.3" y="1196.5" font-size="28" fill="#121212" stroke="#121212" stroke-width="0.84" textLength="95.3" lengthAdjust="spacingAndGlyphs">(10.09%)</text>
<path d="M966 893 L972.7 900.3 L979.5 893" fill="none" stroke="#111" stroke-width="2.2" stroke-linecap="round" stroke-linejoin="round"/>
<text x="991" y="905.5" font-size="28" fill="#121212" stroke="#121212" stroke-width="0.84" textLength="66" lengthAdjust="spacingAndGlyphs">debug</text>
<rect x="970.3" y="1053" width="1.7" height="135" fill="#dcdcdc"/>
<rect x="972" y="914.2" width="527.7" height="135.2" rx="8.5" ry="8.5" fill="none" stroke="#eb5858" stroke-width="8"/>
<text x="1016.4" y="949.4" font-size="28" fill="#41558f" stroke="#41558f" stroke-width="0.84" textLength="165.2" lengthAdjust="spacingAndGlyphs">AllocatedBytes</text>
<rect x="1016.4" y="952.5" width="165.2" height="1.8" fill="#6f7fae"/>
<path d="M1192.8 937.2 h11 l-5.5 5.6 z" fill="#41558f"/>
<text x="1294.6" y="948.6" font-size="28" fill="#121212" stroke="#121212" stroke-width="0.84" textLength="112.1" lengthAdjust="spacingAndGlyphs">776.88 KB</text>
<text x="1016.4" y="993.4" font-size="28" fill="#41558f" stroke="#41558f" stroke-width="0.84" textLength="217" lengthAdjust="spacingAndGlyphs">AllocatedBytesNum</text>
<rect x="1016.4" y="996.5" width="217" height="1.8" fill="#6f7fae"/>
<path d="M1244.6 981.2 h11 l-5.5 5.6 z" fill="#41558f"/>
<text x="1294.6" y="992.6" font-size="28" fill="#121212" stroke="#121212" stroke-width="0.84" textLength="81" lengthAdjust="spacingAndGlyphs">795520</text>
<text x="1016.4" y="1037.4" font-size="28" fill="#41558f" stroke="#41558f" stroke-width="0.84" textLength="187.9" lengthAdjust="spacingAndGlyphs">AllocatedObjects</text>
<rect x="1016.4" y="1040.5" width="187.9" height="1.8" fill="#6f7fae"/>
<path d="M1215.5 1025.2 h11 l-5.5 5.6 z" fill="#41558f"/>
<text x="1294.6" y="1036.6" font-size="28" fill="#121212" stroke="#121212" stroke-width="0.84" textLength="53.6" lengthAdjust="spacingAndGlyphs">8909</text>
<text x="1016.4" y="1081.4" font-size="28" fill="#41558f" stroke="#41558f" stroke-width="0.84" textLength="81.6" lengthAdjust="spacingAndGlyphs">NivCsw</text>
<rect x="1016.4" y="1084.5" width="81.6" height="1.8" fill="#6f7fae"/>
<path d="M1109.2 1069.2 h11 l-5.5 5.6 z" fill="#41558f"/>
<text x="1294.6" y="1080.6" font-size="28" fill="#121212" stroke="#121212" stroke-width="0.84" textLength="12.4" lengthAdjust="spacingAndGlyphs">0</text>
<text x="1016.4" y="1125.4" font-size="28" fill="#41558f" stroke="#41558f" stroke-width="0.84" textLength="68.2" lengthAdjust="spacingAndGlyphs">MajFlt</text>
<rect x="1016.4" y="1128.5" width="68.2" height="1.8" fill="#6f7fae"/>
<path d="M1095.8 1113.2 h11 l-5.5 5.6 z" fill="#41558f"/>
<text x="1294.6" y="1124.6" font-size="28" fill="#121212" stroke="#121212" stroke-width="0.84" textLength="12.4" lengthAdjust="spacingAndGlyphs">0</text>
<text x="1016.4" y="1169.4" font-size="28" fill="#41558f" stroke="#41558f" stroke-width="0.84" textLength="43.1" lengthAdjust="spacingAndGlyphs">Gap</text>
<rect x="1016.4" y="1172.5" width="43.1" height="1.8" fill="#6f7fae"/>
<path d="M1070.7 1157.2 h11 l-5.5 5.6 z" fill="#41558f"/>
<text x="1294.6" y="1168.6" font-size="28" fill="#121212" stroke="#121212" stroke-width="0.84" textLength="102.7" lengthAdjust="spacingAndGlyphs">0.835312</text>
</g>
<text class="wm" x="1528.5" y="1153" font-size="24.7" fill="#f4f4f4" filter="url(#wmf)" textLength="385" lengthAdjust="spacingAndGlyphs">掘金技术社区 @ 字节跳动技术团队</text>
</svg></body></html>
